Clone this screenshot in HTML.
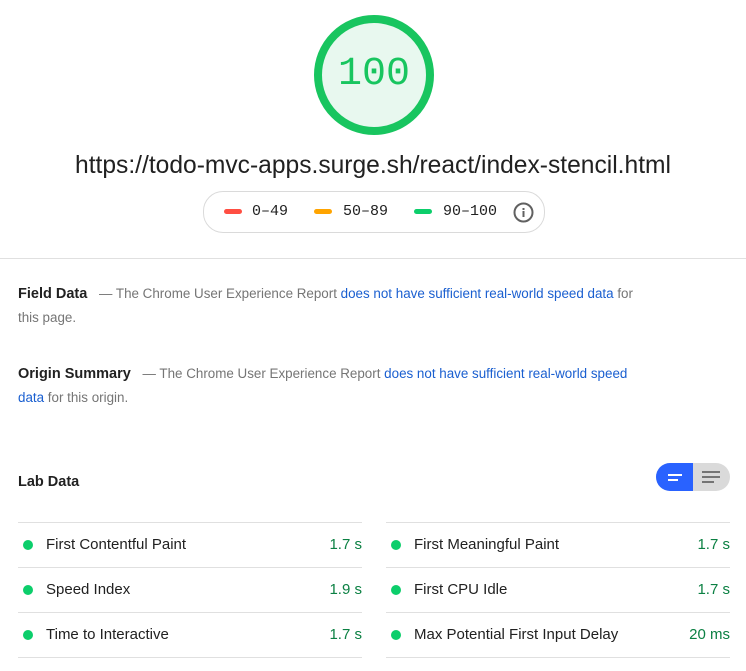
<!DOCTYPE html>
<html><head><style>
body{margin:0;width:746px;height:671px;background:#fff;font-family:"Liberation Sans",sans-serif;color:#212121;position:relative;overflow:hidden}
.a{position:absolute}
.mono{font-family:"Liberation Mono",monospace}
.p{font-size:13.4px;color:#757575;line-height:24px}
.p b{color:#212121;font-size:14.5px;margin-right:8px}
.p a{color:#1a5fd0;text-decoration:none}
.row{position:absolute;height:44px;border-top:1px solid #e0e0e0;font-size:15px;line-height:44px}
.row .d{position:absolute;left:5px;top:17px;width:10px;height:10px;border-radius:50%;background:#0cce6b}
.row .n{position:absolute;left:28px}
.row .v{position:absolute;right:0;color:#0b8043}
</style></head><body>
<svg class="a" style="left:310px;top:11px" width="128" height="128"><circle cx="64" cy="64" r="56" fill="#e8f8ef" stroke="#18c55f" stroke-width="8"/></svg>
<div class="a mono" style="left:310px;top:52px;width:128px;text-align:center;font-size:40px;color:#18c55f;line-height:46px">100</div>
<div class="a" style="left:0;width:746px;top:151px;text-align:center;font-size:24.6px;line-height:30px">https://todo-mvc-apps.surge.sh/react/index-stencil.html</div>
<div class="a" style="left:203px;top:191px;width:340px;height:40px;border:1px solid #dadada;border-radius:20px"></div>
<div class="a" style="left:224px;top:209px;width:18px;height:5px;border-radius:3px;background:#ff4e42"></div>
<div class="a mono" style="left:252px;top:202px;font-size:15px;line-height:20px">0–49</div>
<div class="a" style="left:314px;top:209px;width:18px;height:5px;border-radius:3px;background:#ffa400"></div>
<div class="a mono" style="left:343px;top:202px;font-size:15px;line-height:20px">50–89</div>
<div class="a" style="left:414px;top:209px;width:18px;height:5px;border-radius:3px;background:#0cce6b"></div>
<div class="a mono" style="left:443px;top:202px;font-size:15px;line-height:20px">90–100</div>
<svg class="a" style="left:513px;top:202px" width="21" height="21"><circle cx="10.5" cy="10.5" r="9" fill="none" stroke="#616161" stroke-width="2"/><rect x="9.5" y="9" width="2" height="6" fill="#616161"/><rect x="9.5" y="6" width="2" height="2" fill="#616161"/></svg>
<div class="a" style="left:0;top:258px;width:746px;height:1px;background:#e0e0e0"></div>
<div class="a p" style="left:18px;top:282px;width:625px"><b>Field Data</b> — The Chrome User Experience Report <a>does not have sufficient real-world speed data</a> for this page.</div>
<div class="a p" style="left:18px;top:362px;width:625px"><b>Origin Summary</b> — The Chrome User Experience Report <a>does not have sufficient real-world speed data</a> for this origin.</div>
<div class="a" style="left:18px;top:472px;font-size:14.5px;font-weight:bold;line-height:20px">Lab Data</div>
<div class="a" style="left:656px;top:463px;width:74px;height:28px;border-radius:14px;overflow:hidden;background:#dadada">
<div style="width:37px;height:28px;background:#2962ff"></div>
<div class="a" style="left:12px;top:11px;width:14px;height:2px;background:#fff"></div>
<div class="a" style="left:12px;top:16px;width:10px;height:2px;background:#fff"></div>
<div class="a" style="left:46px;top:8px;width:18px;height:2px;background:#757575"></div>
<div class="a" style="left:46px;top:13px;width:18px;height:2px;background:#757575"></div>
<div class="a" style="left:46px;top:18px;width:12px;height:2px;background:#757575"></div>
</div>
<div class="row" style="left:18px;width:344px;top:522px"><span class="d"></span><span class="n">First Contentful Paint</span><span class="v">1.7 s</span></div>
<div class="row" style="left:18px;width:344px;top:567px"><span class="d"></span><span class="n">Speed Index</span><span class="v">1.9 s</span></div>
<div class="row" style="left:18px;width:344px;top:612px;border-bottom:1px solid #e0e0e0"><span class="d"></span><span class="n">Time to Interactive</span><span class="v">1.7 s</span></div>
<div class="row" style="left:386px;width:344px;top:522px"><span class="d"></span><span class="n">First Meaningful Paint</span><span class="v">1.7 s</span></div>
<div class="row" style="left:386px;width:344px;top:567px"><span class="d"></span><span class="n">First CPU Idle</span><span class="v">1.7 s</span></div>
<div class="row" style="left:386px;width:344px;top:612px;border-bottom:1px solid #e0e0e0"><span class="d"></span><span class="n">Max Potential First Input Delay</span><span class="v">20 ms</span></div>
</body></html>
